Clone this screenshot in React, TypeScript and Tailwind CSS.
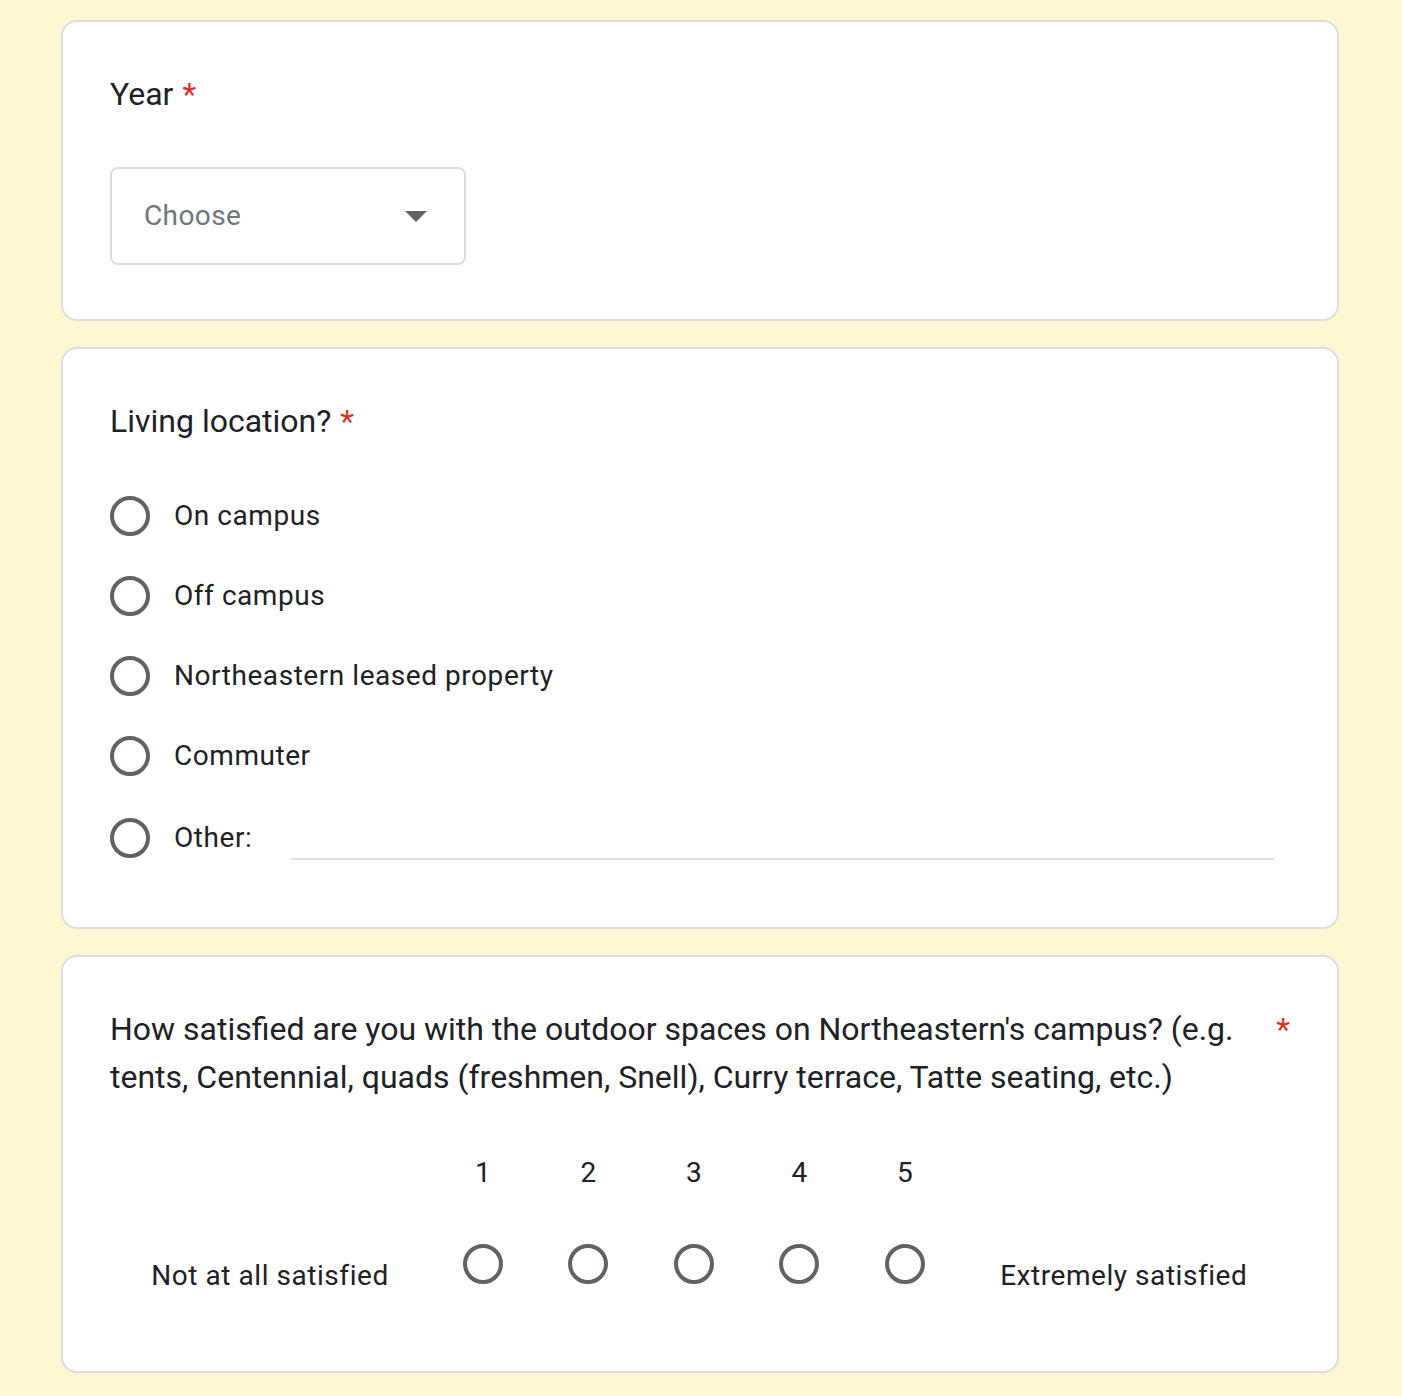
const options = ["On campus", "Off campus", "Northeastern leased property", "Commuter"];
const scale = [1, 2, 3, 4, 5];

function Radio() {
  return <div className="w-[40px] h-[40px] shrink-0 rounded-full border-[4px] border-[#5f6368]" />;
}

function Req() {
  return <span className="ml-[9px] text-[#d93025]">*</span>;
}

export default function App() {
  return (
    <div
      className="min-h-[1396px] bg-[#fdf8d2] pt-[20px] pl-[61px] text-[#202124]"
      style={{ fontFamily: "Roboto, 'Noto Sans', Arial, sans-serif" }}
    >
      <div className="w-[1278px] flex flex-col gap-[26px]">
        {/* year */}
        <div className="bg-white border-2 border-[#dadce0] rounded-[16px] px-[47px] pt-[48px] pb-[54px]">
          <div className="text-[32px] leading-[48px]">
            Year<Req />
          </div>
          <div className="mt-[49px] w-[356px] h-[98px] border-2 border-[#dadce0] rounded-[8px] flex items-center justify-between pl-[32px] pr-[37px]">
            <span className="text-[28px] text-[#70757a] tracking-[0.4px]">Choose</span>
            <svg width="22" height="11" viewBox="0 0 22 11">
              <path d="M0 0 L22 0 L11 11 Z" fill="#5f6368" />
            </svg>
          </div>
        </div>

        {/* living location */}
        <div className="bg-white border-2 border-[#dadce0] rounded-[16px] px-[47px] pt-[48px] pb-[47px]">
          <div className="text-[32px] leading-[48px]">
            Living location?<Req />
          </div>
          <div className="mt-[31px] flex flex-col">
            {options.map((o) => (
              <div key={o} className="h-[80px] flex items-center gap-[24px]">
                <Radio />
                <span className="text-[28px] tracking-[0.55px]">{o}</span>
              </div>
            ))}
            <div className="h-[84px] flex items-center gap-[24px]">
              <Radio />
              <span className="text-[28px] tracking-[0.55px]">Other:</span>
              <div className="ml-[15px] mr-[16px] flex-1 h-[44px] border-b-2 border-[#e0e0e0]" />
            </div>
          </div>
        </div>

        {/* satisfaction */}
        <div className="bg-white border-2 border-[#dadce0] rounded-[16px] px-[47px] pt-[48px] pb-[71px]">
          <div className="flex items-start gap-[30px]">
            <div className="flex-1 text-[32px] leading-[48px]">
              How satisfied are you with the outdoor spaces on Northeastern's campus? (e.g. tents, Centennial, quads
              (freshmen, Snell), Curry terrace, Tatte seating, etc.)
            </div>
            <span className="text-[32px] leading-[48px] text-[#d93025]">*</span>
          </div>
          <div className="mt-[48px] flex items-end">
            <div className="w-[320px] h-[48px] leading-[48px] text-center text-[28px] tracking-[0.55px]">
              Not at all satisfied
            </div>
            {scale.map((n) => (
              <div key={n} className="w-[105.5px] flex flex-col items-center pb-[16px]">
                <div className="h-[48px] leading-[48px] text-[28px]">{n}</div>
                <div className="mt-[47px]">
                  <Radio />
                </div>
              </div>
            ))}
            <div className="flex-1 h-[48px] leading-[48px] text-center text-[28px] tracking-[0.55px]">
              Extremely satisfied
            </div>
          </div>
        </div>
      </div>
    </div>
  );
}
